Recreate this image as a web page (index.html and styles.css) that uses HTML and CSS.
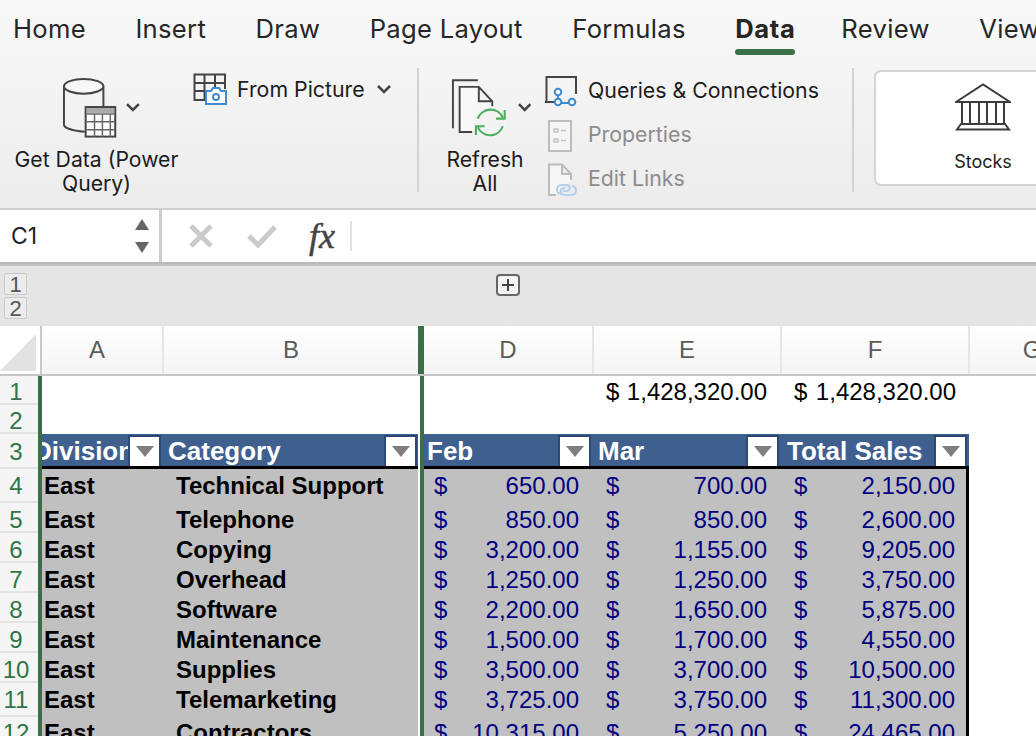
FILE: index.html
```html
<!DOCTYPE html>
<html lang="en">
<head>
    <meta charset="UTF-8">
    <title>Data ribbon</title>
    <link rel="stylesheet" href="styles.css">
</head>
<body>
<div class="page">

    <div class="ribbon">
        <div class="tabs">
            <span class="tab">Home</span>
            <span class="tab">Insert</span>
            <span class="tab">Draw</span>
            <span class="tab">Page Layout</span>
            <span class="tab">Formulas</span>
            <span class="tab active">Data</span>
            <span class="tab">Review</span>
            <span class="tab">View</span>
        </div>
        <div class="tools">
            <div class="big-btn get-data">
                <div class="big-icon">
                    <svg width="56" height="62" viewBox="0 0 56 62" fill="none">
                        <path d="M2 9V48C2 51 10 54 23 55" stroke="#444" stroke-width="2"/>
                        <path d="M42 9V29" stroke="#444" stroke-width="2"/>
                        <ellipse cx="22" cy="9" rx="20" ry="7.5" fill="#f8f8f8" stroke="#444" stroke-width="2"/>
                        <rect x="24" y="30" width="30" height="30" fill="#fff" stroke="#444" stroke-width="2"/>
                        <rect x="25" y="31" width="28" height="5" fill="#aaa"/>
                        <path d="M25 37H54M25 45H54M25 53H54M33 37V60M41 37V60M49 37V60" stroke="#666" stroke-width="1.5"/>
                    </svg>
                    <svg class="chev" width="14" height="10" viewBox="0 0 14 10" fill="none"><path d="M1 2L7 8L13 2" stroke="#444" stroke-width="2.6"/></svg>
                </div>
                <div class="big-label">Get Data (Power<br>Query)</div>
            </div>
            <div class="picture-item">
                <svg width="34" height="33" viewBox="0 0 34 33" fill="none">
                    <path d="M12 27H1.500V1.500H32V16M1.500 10H32M1.500 18H12M11.500 1.500V27M22 1.500V16" stroke="#444" stroke-width="2"/>
                    <path d="M13 18H18L20 15H26L28 18H33V31H13Z" fill="#fff" stroke="#3f8bd0" stroke-width="2"/>
                    <circle cx="23" cy="24" r="3" stroke="#3f8bd0" stroke-width="2"/>
                </svg>
                <span class="item-text">From Picture</span>
                <svg class="chev-side" width="14" height="10" viewBox="0 0 14 10" fill="none"><path d="M1 2L7 8L13 2" stroke="#444" stroke-width="2.6"/></svg>
            </div>
            <div class="divider first"></div>
            <div class="big-btn refresh">
                <div class="big-icon">
                    <svg width="60" height="63" viewBox="0 0 60 63" fill="none">
                        <path d="M2 52V2H28" stroke="#444" stroke-width="2"/>
                        <path d="M22 56H9V9H29L43 24V34M29 9V24H43" fill="#f8f8f8" stroke="#444" stroke-width="2"/>
                        <circle cx="41" cy="46" r="17" fill="#f3f3f3"/>
                        <path d="M28 42A14 14 0 0 1 54 41M54 50A14 14 0 0 1 28 51" stroke="#4caf5f" stroke-width="2.200"/>
                        <path d="M56 33V42H47M26 59V50H35" stroke="#4caf5f" stroke-width="2.200"/>
                    </svg>
                    <svg class="chev" width="14" height="10" viewBox="0 0 14 10" fill="none"><path d="M1 2L7 8L13 2" stroke="#444" stroke-width="2.6"/></svg>
                </div>
                <div class="big-label">Refresh<br>All</div>
            </div>
            <div class="side-list">
                <div class="side-item">
                    <svg width="34" height="33" viewBox="0 0 34 33" fill="none">
                        <path d="M14 27H2.500V2H32V19M1 27H14" stroke="#444" stroke-width="2"/>
                        <path d="M14 20V24M17 28H25" stroke="#3f8bd0" stroke-width="2"/>
                        <circle cx="14" cy="17" r="3.300" stroke="#3f8bd0" stroke-width="2" fill="#f3f3f3"/>
                        <circle cx="14" cy="27" r="3.300" stroke="#3f8bd0" stroke-width="2" fill="#f3f3f3"/>
                        <circle cx="28" cy="27" r="3.300" stroke="#3f8bd0" stroke-width="2" fill="#f3f3f3"/>
                    </svg>
                    <span class="item-text">Queries &amp; Connections</span>
                </div>
                <div class="side-item off">
                    <svg width="34" height="33" viewBox="0 0 34 33" fill="none">
                        <rect x="5" y="2" width="22" height="30" stroke="#bcbcbc" stroke-width="2" fill="#f6f6f6"/>
                        <path d="M10 10H14V13H10ZM10 20H14V23H10Z" stroke="#c2c2c2" stroke-width="1.500"/>
                        <path d="M17 11.500H22M17 21.500H22" stroke="#c2c2c2" stroke-width="1.500"/>
                    </svg>
                    <span class="item-text">Properties</span>
                </div>
                <div class="side-item off">
                    <svg width="34" height="33" viewBox="0 0 34 33" fill="none">
                        <path d="M12 32H5V1.500H18L27 11V17M18 1.500V11H27" stroke="#bcbcbc" stroke-width="2" fill="#f6f6f6"/>
                        <path d="M17 31C11 30 12 22 18 22H22C27 22 27 28 22 28H19" stroke="#b4d0ea" stroke-width="2"/>
                        <path d="M22 32H27C33 32 34 24 28 23M21 25C15 25 15 32 22 32" stroke="#b4d0ea" stroke-width="2"/>
                    </svg>
                    <span class="item-text">Edit Links</span>
                </div>
            </div>
            <div class="divider second"></div>
            <div class="stocks-card">
                <svg width="56" height="48" viewBox="0 0 56 48" fill="none">
                    <path d="M1 19L28 1.500L55 19Z" stroke="#3d3d3d" stroke-width="2"/>
                    <path d="M7 19V41M15 19V41M24 19V41M32 19V41M41 19V41M49 19V41" stroke="#3d3d3d" stroke-width="2"/>
                    <path d="M6 41H50L54 46.500H2Z" stroke="#3d3d3d" stroke-width="2"/>
                </svg>
                <span class="stocks-label">Stocks</span>
            </div>
        </div>
    </div>

    <div class="formula-bar">
        <div class="name-box">
            <span>C1</span>
            <div class="spinner"><i class="up"></i><i class="down"></i></div>
        </div>
        <div class="formula-btns">
            <svg width="26" height="26" viewBox="0 0 26 26" fill="none"><path d="M3 3L23 23M23 3L3 23" stroke="#cbcbcb" stroke-width="5"/></svg>
            <svg width="30" height="24" viewBox="0 0 30 24" fill="none"><path d="M2 12L11 21L28 3" stroke="#cbcbcb" stroke-width="5"/></svg>
            <span class="fx">fx</span>
            <div class="formula-sep"></div>
        </div>
    </div>

    <div class="outline-bar">
        <div class="levels">
            <span class="level">1</span>
            <span class="level">2</span>
        </div>
        <span class="expand"></span>
    </div>

    <div class="col-heads">
        <div class="corner"><div class="corner-mark"></div></div>
        <div class="col-head narrow">A</div>
        <div class="col-head plain">B</div>
        <div class="col-hidden"></div>
        <div class="col-head">D</div>
        <div class="col-head">E</div>
        <div class="col-head">F</div>
        <div class="col-head">G</div>
    </div>

    <div class="sheet">
        <div class="row h29">
            <div class="num">1</div><div></div><div></div><div class="gap"></div><div></div>
            <div class="money total"><span>$</span><span>1,428,320.00</span></div>
            <div class="money total"><span>$</span><span>1,428,320.00</span></div>
        </div>
        <div class="row h29">
            <div class="num">2</div><div></div><div></div><div class="gap"></div>
        </div>
        <div class="row table-head">
            <div class="num">3</div>
            <div class="head-cell"><span class="division">Division</span><i class="filter"></i></div>
            <div class="head-cell"><span>Category</span><i class="filter"></i></div>
            <div class="gap"></div>
            <div class="head-cell feb"><span>Feb</span><i class="filter"></i></div>
            <div class="head-cell"><span>Mar</span><i class="filter"></i></div>
            <div class="head-cell last"><span>Total Sales</span><i class="filter"></i></div>
        </div>
        <div class="row data h34">
            <div class="num">4</div><div class="cell">East</div><div class="cell cat">Technical Support</div><div class="gap"></div>
            <div class="money"><span>$</span><span>650.00</span></div><div class="money"><span>$</span><span>700.00</span></div><div class="money last"><span>$</span><span>2,150.00</span></div>
        </div>
        <div class="row data h30">
            <div class="num">5</div><div class="cell">East</div><div class="cell cat">Telephone</div><div class="gap"></div>
            <div class="money"><span>$</span><span>850.00</span></div><div class="money"><span>$</span><span>850.00</span></div><div class="money last"><span>$</span><span>2,600.00</span></div>
        </div>
        <div class="row data h30">
            <div class="num">6</div><div class="cell">East</div><div class="cell cat">Copying</div><div class="gap"></div>
            <div class="money"><span>$</span><span>3,200.00</span></div><div class="money"><span>$</span><span>1,155.00</span></div><div class="money last"><span>$</span><span>9,205.00</span></div>
        </div>
        <div class="row data h30">
            <div class="num">7</div><div class="cell">East</div><div class="cell cat">Overhead</div><div class="gap"></div>
            <div class="money"><span>$</span><span>1,250.00</span></div><div class="money"><span>$</span><span>1,250.00</span></div><div class="money last"><span>$</span><span>3,750.00</span></div>
        </div>
        <div class="row data h30">
            <div class="num">8</div><div class="cell">East</div><div class="cell cat">Software</div><div class="gap"></div>
            <div class="money"><span>$</span><span>2,200.00</span></div><div class="money"><span>$</span><span>1,650.00</span></div><div class="money last"><span>$</span><span>5,875.00</span></div>
        </div>
        <div class="row data h30">
            <div class="num">9</div><div class="cell">East</div><div class="cell cat">Maintenance</div><div class="gap"></div>
            <div class="money"><span>$</span><span>1,500.00</span></div><div class="money"><span>$</span><span>1,700.00</span></div><div class="money last"><span>$</span><span>4,550.00</span></div>
        </div>
        <div class="row data h30">
            <div class="num">10</div><div class="cell">East</div><div class="cell cat">Supplies</div><div class="gap"></div>
            <div class="money"><span>$</span><span>3,500.00</span></div><div class="money"><span>$</span><span>3,700.00</span></div><div class="money last"><span>$</span><span>10,500.00</span></div>
        </div>
        <div class="row data h34">
            <div class="num">11</div><div class="cell">East</div><div class="cell cat">Telemarketing</div><div class="gap"></div>
            <div class="money"><span>$</span><span>3,725.00</span></div><div class="money"><span>$</span><span>3,750.00</span></div><div class="money last"><span>$</span><span>11,300.00</span></div>
        </div>
        <div class="row data h32">
            <div class="num">12</div><div class="cell">East</div><div class="cell cat">Contractors</div><div class="gap"></div>
            <div class="money"><span>$</span><span>10,315.00</span></div><div class="money"><span>$</span><span>5,250.00</span></div><div class="money last"><span>$</span><span>24,465.00</span></div>
        </div>
    </div>

</div>
</body>
</html>
```

FILE: styles.css
```css
* {
    box-sizing: border-box;
}
body {
    margin: 0;
    background: #fff;
    font-family: "Liberation Sans", Arial, sans-serif;
}
.page {
    width: 1036px;
    height: 736px;
    overflow: hidden;
}

/* ribbon */
.ribbon {
    height: 210px;
    background: linear-gradient(#f9f9f9, #ececec);
    border-bottom: 2px solid #cfcfcf;
    font-family: Inter, "Liberation Sans", sans-serif;
    color: #1c1c1c;
}
.tabs {
    display: flex;
    height: 56px;
    padding-left: 13px;
    white-space: nowrap;
}
.tab {
    position: relative;
    font-size: 25.6px;
    letter-spacing: 0.3px;
    line-height: 58px;
    margin-right: 49.5px;
    color: #262626;
    flex-shrink: 0;
}
.tab.active {
    font-weight: 700;
    letter-spacing: 0.6px;
    margin-right: 46px;
}
.tab.active::after {
    content: "";
    position: absolute;
    left: 0;
    right: 0;
    top: 49px;
    height: 6px;
    border-radius: 3px;
    background: #3a7048;
}
.tools {
    display: flex;
    height: 152px;
}
.tools > * {
    flex-shrink: 0;
}
.big-btn {
    display: flex;
    flex-direction: column;
    align-items: center;
    padding-top: 21px;
}
.get-data {
    width: 193px;
}
.refresh {
    width: 122px;
    padding-left: 4px;
}
.big-icon {
    display: flex;
    height: 62px;
    margin-left: 8px;
    width: 78px;
    flex-shrink: 0;
}
.refresh .big-icon {
    margin-left: 12px;
    width: 80px;
}
.chev {
    margin: 25px 0 0 9px;
}
.big-label {
    margin-top: 8px;
    font-size: 21.2px;
    line-height: 24px;
    text-align: center;
    white-space: nowrap;
}
.picture-item {
    display: flex;
    align-items: flex-start;
    width: 224px;
    padding-top: 17px;
}
.item-text {
    font-size: 21.3px;
    line-height: 32px;
    white-space: nowrap;
}
.picture-item .item-text {
    margin-left: 10px;
}
.chev-side {
    margin: 11px 0 0 12px;
}
.divider {
    width: 2px;
    height: 124px;
    margin-top: 12px;
    background: #d2d2d2;
}
.divider.first {
    margin-right: 3px;
}
.side-list {
    display: flex;
    flex-direction: column;
    width: 307px;
    padding-top: 19px;
}
.side-item {
    display: flex;
    height: 44px;
}
.side-item .item-text {
    margin-left: 10px;
    line-height: 31px;
}
.side-item.off {
    color: #8c8c8c;
}
.divider.second {
    margin-left: 1px;
}
.stocks-card {
    display: flex;
    flex-direction: column;
    align-items: center;
    width: 240px;
    height: 116px;
    margin: 14px 0 0 20px;
    padding: 11px 22px 0 0;
    background: #fff;
    border: 2px solid #d4d4d4;
    border-radius: 7px;
}
.stocks-label {
    margin-top: 19px;
    font-size: 18px;
    line-height: 24px;
}

/* formula bar */
.formula-bar {
    display: flex;
    height: 54px;
    background: #fff;
    border-bottom: 2px solid #b9b9b9;
}
.name-box {
    display: flex;
    justify-content: space-between;
    align-items: center;
    width: 162px;
    padding: 0 10px 0 11px;
    border-right: 3px solid #cdcdcd;
    font-family: Inter, "Liberation Sans", sans-serif;
    font-size: 23px;
    color: #222;
}
.spinner {
    display: flex;
    flex-direction: column;
    gap: 12px;
}
.spinner i {
    display: block;
    width: 14px;
    height: 11px;
    background: #666;
}
.spinner .up {
    clip-path: polygon(50% 0, 100% 100%, 0 100%);
}
.spinner .down {
    clip-path: polygon(0 0, 100% 0, 50% 100%);
}
.formula-btns {
    display: flex;
    align-items: center;
    padding-left: 26px;
}
.formula-btns svg + svg {
    margin-left: 33px;
}
.fx {
    margin-left: 32px;
    font-family: "Liberation Serif", serif;
    font-style: italic;
    font-size: 36px;
    line-height: 40px;
    color: #444;
    -webkit-text-stroke: 0.5px #444;
}
.formula-sep {
    width: 2px;
    height: 30px;
    margin-left: 15px;
    background: #e2e2e2;
}

/* outline levels */
.outline-bar {
    display: flex;
    height: 62px;
    background: #e5e5e5;
    border-top: 2px solid #c4c4c4;
}
.levels {
    display: flex;
    flex-direction: column;
    gap: 2px;
    padding: 7px 0 0 4px;
}
.level {
    width: 23px;
    height: 22px;
    border: 1px solid #c8c8c8;
    border-radius: 2px;
    background: #ececec;
    font-size: 22px;
    line-height: 21px;
    text-align: center;
    color: #555;
}
.expand {
    position: relative;
    width: 24px;
    height: 22px;
    margin: 8px 0 0 469px;
    border: 2px solid #666;
    border-radius: 4px;
    background: #f3f3f3;
}
.expand::before,
.expand::after {
    content: "";
    position: absolute;
    background: #444;
}
.expand::before {
    left: 4px;
    right: 4px;
    top: 8px;
    height: 2px;
}
.expand::after {
    top: 3px;
    bottom: 3px;
    left: 9px;
    width: 2px;
}

/* sheet */
.col-heads {
    display: grid;
    grid-template-columns: 42px 122px 254px 6px 170px 188px 188px 126px;
    height: 50px;
    border-bottom: 2px solid #c6c6c6;
    background: linear-gradient(#fff, #f4f4f4);
}
.corner {
    border-right: 2px solid #c8c8c8;
    padding: 8px 4px 0 0;
    background: #fff;
}
.corner-mark {
    height: 37px;
    background: #e2e2e2;
    clip-path: polygon(100% 0, 100% 100%, 0 100%);
}
.col-head {
    border-right: 2px solid #e6e6e6;
    font-size: 24px;
    line-height: 48px;
    text-align: center;
    color: #5c5c5c;
}
.col-head.narrow {
    padding-right: 10px;
}
.col-head.plain {
    border-right: none;
}
.col-hidden {
    background: #3a7048;
}
.row {
    display: grid;
    grid-template-columns: 42px 120px 256px 6px 168px 188px 189px;
    font-size: 24px;
    line-height: 26px;
    color: #000;
}
.h29 {
    height: 29px;
}
.h30 {
    height: 30px;
}
.h32 {
    height: 32px;
}
.h34 {
    height: 34px;
}
.num {
    display: flex;
    justify-content: center;
    align-items: flex-end;
    padding-right: 6px;
    background: #f5f5f5;
    border-right: 4px solid #3a7048;
    box-shadow: inset 0 -2px #e4e4e4;
    color: #2f7548;
}
.h34 .num,
.h32 .num,
.table-head .num {
    align-items: center;
}
.gap {
    background: #fff;
    border-right: 4px solid #3a7048;
}
.table-head {
    height: 35px;
}
.head-cell {
    display: flex;
    justify-content: space-between;
    overflow: hidden;
    height: 35px;
    padding-left: 6px;
    background: #3f5f8f;
    border-bottom: 3px solid #000;
    font-size: 26px;
    font-weight: 700;
    line-height: 35px;
    color: #fff;
    white-space: nowrap;
}
.head-cell.feb {
    padding-left: 3px;
}
.head-cell.last {
    padding-left: 7px;
}
.division {
    margin-left: -15px;
    width: 0;
}
.filter {
    position: relative;
    flex-shrink: 0;
    width: 33px;
    height: 31px;
    margin: 1px 1px 0 0;
    background: #fff;
    border: 2px solid #2c4a75;
    border-bottom: none;
}
.head-cell.last .filter {
    margin-right: 2px;
}
.filter::after {
    content: "";
    position: absolute;
    left: 6px;
    top: 9px;
    width: 18px;
    height: 11px;
    background: #7f7f7f;
    clip-path: polygon(0 0, 100% 0, 50% 100%);
}
.data > div:not(.num):not(.gap) {
    background: #c0c0c0;
}
.cell {
    display: flex;
    align-items: flex-end;
    padding-left: 2px;
    font-weight: 700;
    white-space: nowrap;
}
.h34 .cell,
.h34 .money,
.h32 .cell,
.h32 .money {
    align-items: center;
}
.cell.cat {
    padding-left: 14px;
}
.money {
    display: flex;
    justify-content: space-between;
    align-items: flex-end;
    padding: 0 13px 0 14px;
    color: #000080;
}
.money:nth-child(5) {
    padding-left: 10px;
}
.money.total {
    color: #000;
}
.money.last {
    border-right: 3px solid #000;
    padding-right: 11px;
}
```
